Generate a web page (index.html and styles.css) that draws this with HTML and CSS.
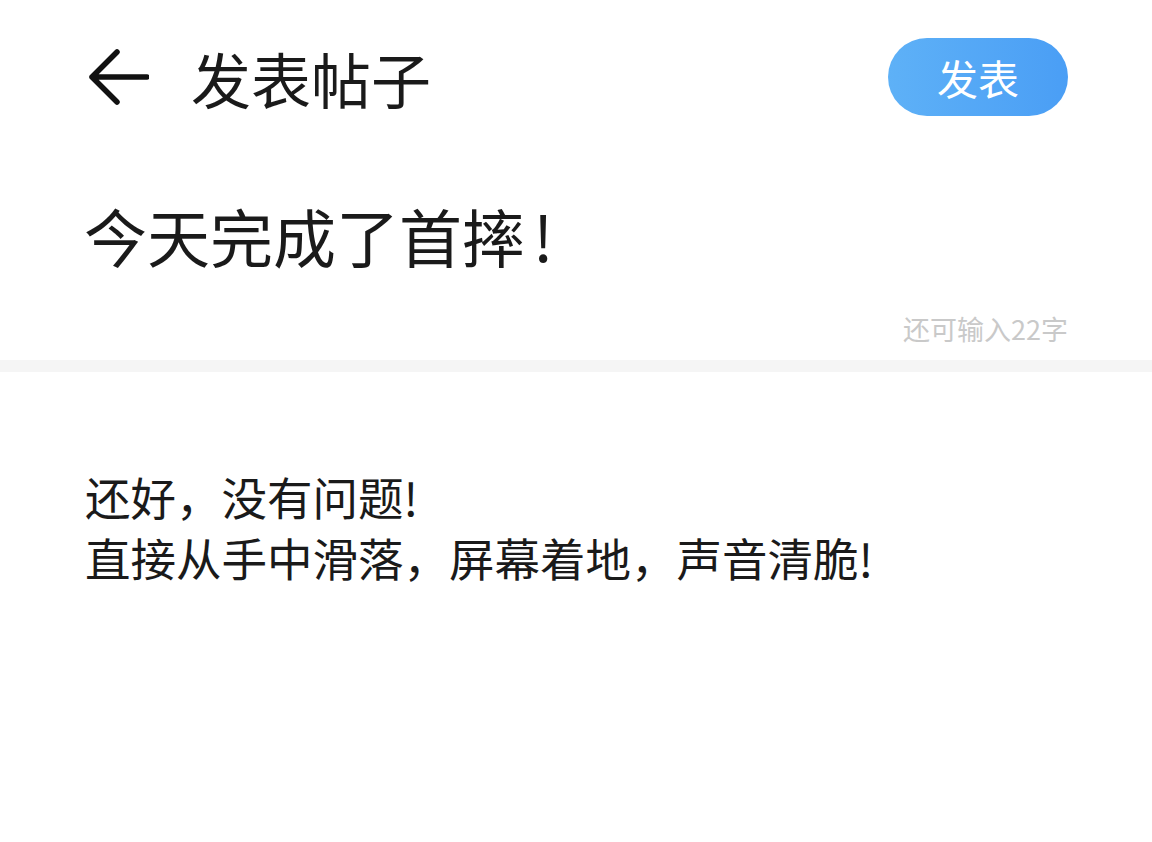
FILE: index.html
```html
<!DOCTYPE html>
<html lang="zh-CN">
  <head>
    <meta charset="UTF-8" />
    <meta name="viewport" content="width=device-width, initial-scale=1.0" />
    <title>发表帖子</title>
    <link rel="stylesheet" href="styles.css">
  </head>
  <body>
    <header class="topbar">
      <button class="back" aria-label="返回">
        <svg width="62" height="56" viewBox="0 0 62 56">
          <path d="M30 3 L5 28 L30 53 M5 28 L60 28" fill="none" stroke="#111" stroke-width="5.5" stroke-linecap="round" stroke-linejoin="round" />
        </svg>
      </button>
      <h1>发表帖子</h1>
      <button class="publish">发表</button>
    </header>

    <section class="titleBox">
      <h2 class="postTitle">今天完成了首摔<span class="bang">!</span></h2>
      <p class="counter">还可输入22字</p>
    </section>

    <div class="divider"></div>

    <section class="content">
      <p>还好，没有问题!</p>
      <p>直接从手中滑落，屏幕着地，声音清脆!</p>
    </section>
  </body>
</html>
```

FILE: styles.css
```css
body {
  margin: 0;
  background: #fff;
  color: #1a1a1a;
  font-family: "Noto Sans CJK SC", "Noto Sans", sans-serif;
}

.topbar {
  height: 154px;
  display: flex;
  align-items: center;
  padding: 0 84px 0 87px;
}

.back {
  border: none;
  background: none;
  padding: 0;
  width: 62px;
  height: 56px;
  margin-right: 42px;
  display: flex;
}

h1 {
  margin: 0;
  flex: 1;
  font-size: 60px;
  font-weight: 400;
  color: #1a1a1a;
}

.publish {
  width: 180px;
  height: 78px;
  border: none;
  border-radius: 39px;
  background: linear-gradient(90deg, #5eb1f7, #4a9ef5);
  color: #fff;
  font-family: inherit;
  font-size: 41px;
}

.titleBox {
  padding: 37px 84px 0 84px;
}

.postTitle {
  margin: 0;
  font-size: 63px;
  font-weight: 400;
  line-height: 1.4;
}

.bang {
  margin-left: 8px;
}

.counter {
  margin: 31px 0 0 0;
  text-align: right;
  font-size: 27px;
  line-height: 1.4;
  color: #c9c9c9;
}

.divider {
  margin-top: 12px;
  height: 12px;
  background: #f5f5f5;
}

.content {
  padding: 94px 84px 0 85px;
}

.content p {
  margin: 0;
  font-size: 45.5px;
  line-height: 61px;
}
```
